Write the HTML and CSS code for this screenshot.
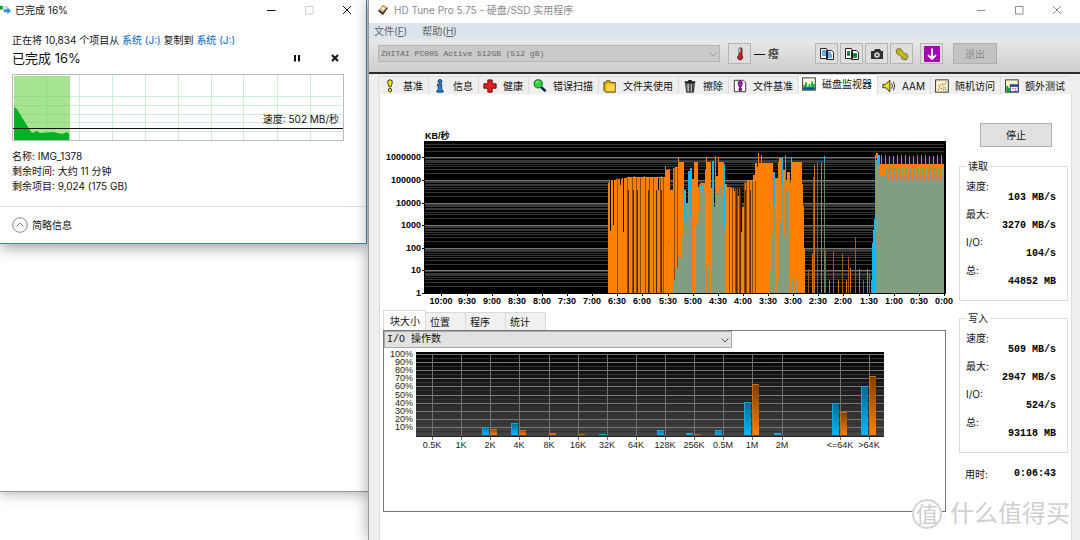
FILE: index.html
```html
<!DOCTYPE html>
<html lang="zh-CN">
<head>
<meta charset="utf-8">
<title>HD Tune Pro 5.75</title>
<link rel="stylesheet" href="styles.css">
</head>
<body>
<div class="desktop">
  <div class="window back-window"></div>

  <section class="window copy-window" aria-label="文件复制">
    <header class="titlebar copy-title">
      <svg class="copy-icon" viewBox="0 0 12 12"><rect x="0" y="2" width="9" height="5" fill="#ddd"/><rect x="0" y="2" width="3" height="4" fill="#14a32c"/><path d="M4 6h4V3.500L12 7.500 8 11V9H4z" fill="#2f8fdc"/></svg>
      <h1>已完成 16%</h1>
      <div class="win-buttons">
        <button aria-label="最小化"><svg viewBox="0 0 10 10"><path d="M1 5.500h8.500"/></svg></button>
        <button aria-label="最大化" class="off"><svg viewBox="0 0 10 10"><path d="M1.500 1.500h7.500v7.500h-7.500z"/></svg></button>
        <button aria-label="关闭"><svg viewBox="0 0 10 10"><path d="M1 1l8 8M9 1L1 9"/></svg></button>
      </div>
    </header>
    <div class="copy-body">
      <p class="copy-line">正在将 10,834 个项目从 <a href="#">系统 (J:)</a> 复制到 <a href="#">系统 (J:)</a></p>
      <div class="copy-status">
        <h2>已完成 16%</h2>
        <button aria-label="暂停"><svg viewBox="0 0 10 10"><path d="M3 2v6.500M7 2v6.500"/></svg></button>
        <button aria-label="取消"><svg viewBox="0 0 10 10"><path d="M2 2l6 6M8 2L2 8"/></svg></button>
      </div>
      <svg class="speed-graph" viewBox="0 0 332 67">
        <rect x=".5" y=".5" width="331" height="66" fill="#fff" stroke="#bcbcbc"/>
        <path d="M34.500 1v65M67.500 1v65M100.500 1v65M133.500 1v65M166.500 1v65M199.500 1v65M231.500 1v65M265.500 1v65M298.500 1v65M1 22.500h329M1 31.500h329M1 40.500h329M1 48.500h329M1 57.500h329" stroke="#cdeed2" fill="none"/>
        <rect x="2" y="2" width="56" height="64" fill="#a6e48f"/>
        <path d="M34.500 2v64M2 22.500h56M2 31.500h56M2 40.500h56M2 48.500h56" stroke="#8fdd83" fill="none"/>
        <path d="M2 33l3 2 9 15 6 9 5-2 3 2 14-1 3 1 5 1 5-2 2 2v6H2z" fill="#06b025"/>
        <path d="M1 54.500h330" stroke="#111"/>
        <text x="327" y="49" text-anchor="end">速度: 502 MB/秒</text>
      </svg>
      <ul class="copy-info">
        <li>名称: IMG_1378</li>
        <li>剩余时间: 大约 11 分钟</li>
        <li>剩余项目: 9,024 (175 GB)</li>
      </ul>
    </div>
    <footer class="copy-footer">
      <button><svg viewBox="0 0 16 16"><circle cx="8" cy="8" r="7.300"/><path d="M4.500 9.500L8 6l3.500 3.500"/></svg>简略信息</button>
    </footer>
  </section>

  <section class="window main-window" aria-label="HD Tune Pro">
    <header class="titlebar main-title">
      <svg class="app-icon" viewBox="0 0 12 12"><path d="M1 7l5-6 5 3-5 7z" fill="#3a2a20"/><path d="M2 6l4-5 4 2.500-4 5z" fill="#e0a870"/><circle cx="6" cy="4.500" r="1.500" fill="#fff0d8"/></svg>
      <h1>HD Tune Pro 5.75 - 硬盘/SSD 实用程序</h1>
      <div class="win-buttons">
        <button aria-label="最小化"><svg viewBox="0 0 10 10"><path d="M1 5.500h8.500"/></svg></button>
        <button aria-label="最大化"><svg viewBox="0 0 10 10"><path d="M1.500 1.500h7.500v7.500h-7.500z"/></svg></button>
        <button aria-label="关闭"><svg viewBox="0 0 10 10"><path d="M1 1l8 8M9 1L1 9"/></svg></button>
      </div>
    </header>
    <nav class="menubar"><button>文件(<u>F</u>)</button><button>帮助(<u>H</u>)</button></nav>
    <div class="toolbar">
      <div class="combo drive-combo">
        <select disabled aria-label="驱动器"><option>ZHITAI PC005 Active 512GB (512 gB)</option></select>
        <svg viewBox="0 0 10 10"><path d="M1.500 3.500L5 7l3.500-3.500"/></svg>
      </div>
      <button class="tool" aria-label="温度"><svg viewBox="0 0 16 16"><path d="M7 2.500q1.500-1.500 3 0V9q2 3-1 5-3 0-3.500-2 0-2 1.500-3z" fill="#e01818" stroke="#222" stroke-width=".8"/><path d="M7.700 2.500v4" stroke="#9fd8ea" stroke-width="1.500"/></svg></button>
      <span class="temp">— 癈</span>
      <div class="tool-group">
        <button class="tool" aria-label="复制文本"><svg viewBox="0 0 16 16"><path d="M1.500 2.500h6l1 2v8h-7zM7.500 4.500h5l2 2v7h-7z" fill="#fff" stroke="#222"/><path d="M3 5h4M3 7h4M3 9h4M9 7h3M9 9h4M9 11h4" stroke="#3f8fe0" stroke-width="1.400"/></svg></button>
        <button class="tool" aria-label="复制图像"><svg viewBox="0 0 16 16"><path d="M1.500 2.500h6l1 2v8h-7zM7.500 4.500h5l2 2v7h-7z" fill="#fff" stroke="#222"/><path d="M3 5h3v5H3zM9 7h4v5H9z" fill="#20a030"/><path d="M3 8h3M9 9h4" stroke="#104080"/></svg></button>
        <button class="tool" aria-label="截图"><svg viewBox="0 0 16 16"><path d="M2 5h3l1-2h5l1 2h2v8H2z" fill="#2c3030"/><circle cx="8" cy="9" r="2.800" fill="#d8dce0"/><circle cx="8" cy="9" r="1.300" fill="#555"/></svg></button>
        <button class="tool" aria-label="选项"><svg viewBox="0 0 16 16"><path d="M2 4l3-2 3 2 1 3 4 1 1 3-2 3-4-1-1-3-4-2z" fill="#c8c020" stroke="#6a6410" stroke-width=".8"/><circle cx="5" cy="5" r="1.200" fill="#eee890" stroke="#6a6410" stroke-width=".6"/><circle cx="11" cy="11" r="1.300" fill="#eee890" stroke="#6a6410" stroke-width=".6"/></svg></button>
      </div>
      <button class="tool" aria-label="保存"><svg viewBox="0 0 16 16"><rect x="0" y="0" width="16" height="16" rx="1" fill="#a800b4"/><path d="M8 2.500v10M4 9l4 4 4-4" fill="none" stroke="#fff" stroke-width="1.800"/></svg></button>
      <button class="exit" disabled>退出</button>
    </div>

    <div class="main-tabs" role="tablist">
      <button role="tab"><svg viewBox="0 0 16 16"><path d="M5.500 2q2.500-2.500 5 0 .5 3-1.500 7H7Q5 5 5.500 2z" fill="#f4e800" stroke="#222"/><circle cx="8" cy="12.800" r="2" fill="#f4e800" stroke="#222"/></svg>基准</button>
      <button role="tab"><svg viewBox="0 0 16 16"><circle cx="8" cy="2.800" r="2.200" fill="#1688e8" stroke="#123"/><path d="M5 6h5v7h1.500v2h-7v-2H6V8H5z" fill="#1688e8" stroke="#123" stroke-width=".9"/></svg>信息</button>
      <button role="tab"><svg viewBox="0 0 16 16"><path d="M5.500 1h5v4.500H15v5h-4.500V15h-5v-4.500H1v-5h4.500z" fill="#e42020" stroke="#500"/></svg>健康</button>
      <button role="tab"><svg viewBox="0 0 16 16"><path d="M9 9l5.500 5" stroke="#102060" stroke-width="3"/><circle cx="6" cy="5.500" r="4.700" fill="#28d838" stroke="#174a1c"/><path d="M3.500 5q.5-2 2.500-2.500" stroke="#c8ffc8" fill="none"/></svg>错误扫描</button>
      <button role="tab"><svg viewBox="0 0 16 16"><path d="M1 4h2l1-2h4l1 2h5v11H3L1 13z" fill="#dcae10" stroke="#4e3c00"/><path d="M4 6h9.500v8H4z" fill="#f8d848"/></svg>文件夹使用</button>
      <button role="tab"><svg viewBox="0 0 16 16"><path d="M2 3.500h12M6 2h4" stroke="#222" stroke-width="2"/><path d="M3 5h10l-1 10H4z" fill="#777" stroke="#222"/><path d="M6 6v8M9.500 6v8" stroke="#ddd"/><path d="M8 6v8M11 6v8" stroke="#222"/></svg>擦除</button>
      <button role="tab"><svg viewBox="0 0 16 16"><path d="M1.500 1.500h10l3 3v10h-13z" fill="#fff" stroke="#222"/><path d="M6 3.500q2.500-2 4.500 0 .5 2.500-1.500 6H7.500Q5.500 6 6 3.500z" fill="#b818c8" stroke="#303"/><circle cx="8.300" cy="12" r="1.600" fill="#b818c8" stroke="#303"/></svg>文件基准</button>
      <button role="tab" aria-selected="true"><svg viewBox="0 0 16 16"><rect x=".7" y="1" width="14.500" height="14" fill="#fffde0" stroke="#222"/><path d="M1.500 9h2V6h2v5h2V8h2v3h1V5h2v3h2v6.500H1.500z" fill="#10b028"/><path d="M1.500 12h13v2.500h-13z" fill="#1048a0"/></svg>磁盘监视器</button>
      <button role="tab"><svg viewBox="0 0 16 16"><path d="M1 6h3l5-4.500v13L4 10H1z" fill="#e8dc10" stroke="#222"/><path d="M11 5q2 3 0 6M13 3q3 5 0 10" fill="none" stroke="#222"/></svg>AAM</button>
      <button role="tab"><svg viewBox="0 0 16 16"><rect x=".7" y="1" width="14.500" height="14" fill="#fff8c8" stroke="#222"/><path d="M3 12h1M5 10h1M7 11h1M9 9h1M11 10h1M6 7h1M10 6h1" stroke="#e04030" stroke-width="1.500"/><path d="M4 8h1M8 6h1M12 4h1M12 12h1M9 12h1" stroke="#3060d0" stroke-width="1.500"/></svg>随机访问</button>
      <button role="tab"><svg viewBox="0 0 16 16"><rect x=".7" y="1" width="14.500" height="14" fill="#fff8c8" stroke="#222"/><path d="M1.500 8h2v2h2v5h-4z" fill="#10a028"/><rect x="6" y="6.500" width="9" height="8" fill="#fff" stroke="#1838a0"/><path d="M6 8h9" stroke="#1838a0" stroke-width="2"/><path d="M8 11h2M11 13h2M11 11h2" stroke="#e04040"/></svg>额外测试</button>
    </div>

    <main class="panel">
      <div class="charts">
        <svg id="history" class="history" viewBox="383 128 563 182" role="img" aria-label="读写速度历史"></svg>
        <div class="sub-tabs" role="tablist">
          <button role="tab" aria-selected="true">块大小</button><button role="tab">位置</button><button role="tab">程序</button><button role="tab">统计</button>
        </div>
        <div class="block-panel">
          <div class="combo metric-combo">
            <select aria-label="指标"><option>I/O 操作数</option></select>
            <svg viewBox="0 0 10 10"><path d="M1.500 3.500L5 7l3.500-3.500"/></svg>
          </div>
          <svg id="blocks" class="blocks" viewBox="384 348 561 104" role="img" aria-label="块大小分布"></svg>
        </div>
      </div>
      <aside class="side">
        <button class="stop">停止</button>
        <fieldset>
          <legend>读取</legend>
          <dl><dt>速度:</dt><dd>103 MB/s</dd><dt>最大:</dt><dd>3270 MB/s</dd><dt>I/O:</dt><dd>104/s</dd><dt>总:</dt><dd>44852 MB</dd></dl>
        </fieldset>
        <fieldset>
          <legend>写入</legend>
          <dl><dt>速度:</dt><dd>509 MB/s</dd><dt>最大:</dt><dd>2947 MB/s</dd><dt>I/O:</dt><dd>524/s</dd><dt>总:</dt><dd>93118 MB</dd></dl>
        </fieldset>
        <p class="elapsed"><span>用时:</span><strong>0:06:43</strong></p>
      </aside>
    </main>
  </section>
  <div class="watermark"><span class="seal">值</span><span>什么值得买</span></div>
</div>
<script src="app.js"></script>
</body>
</html>
```
FILE: styles.css
```css
* { box-sizing: border-box; }
body {
  margin: 0;
  font: 10px/14px Inter, "Noto Sans CJK SC", sans-serif;
  color: #111;
  background: #fff;
}
h1, h2, p, ul, dl, dd { margin: 0; padding: 0; font-weight: normal; }
ul { list-style: none; }
button, select { font: inherit; color: inherit; margin: 0; padding: 0; border: 0; background: none; border-radius: 0; }
svg { display: block; flex: none; }

.desktop { position: relative; height: 100vh; overflow: hidden; }
.window { position: absolute; top: 0; background: #fff; }
.back-window { left: 0; width: 369px; height: 492px; border-bottom: 1px solid #999; box-shadow: 0 2px 12px rgba(0,0,0,.3); }
.copy-window { left: 0; width: 367px; border: solid #3c87c4; border-width: 0 1px 1px 0; box-shadow: 0 3px 14px rgba(0,0,0,.4); }
.main-window { left: 368px; right: 0; min-height: 100%; display: flex; flex-direction: column; background: #efefef; border-left: 1px solid #999; box-shadow: 0 0 14px rgba(0,0,0,.35); }

.titlebar { display: flex; align-items: center; }
.titlebar h1 { font-size: 10px; flex: 1; }
.win-buttons { display: flex; }
.win-buttons button { width: 38px; height: 18px; display: grid; place-items: center; }
.win-buttons svg { width: 10px; height: 10px; fill: none; stroke: currentColor; }
.win-buttons .off { color: #ccc; }

.copy-title { height: 19px; gap: 4px; }
.copy-title h1 { font-size: 10px; }
.copy-icon { width: 11px; height: 11px; }
.copy-body { padding: 14px 22px 12px 12px; }
.copy-line a { color: #0066cc; text-decoration: none; }
.copy-status { display: flex; align-items: center; gap: 20px; height: 20px; margin: 1px 0 6px; }
.copy-status h2 { flex: 1; font-size: 13px; line-height: 20px; }
.copy-status button { width: 18px; display: grid; place-items: center; }
.copy-status svg { width: 10px; height: 10px; fill: none; stroke: #111; stroke-width: 2; }
.speed-graph { width: 100%; margin-bottom: 8px; }
.speed-graph text { font-size: 10px; fill: #111; }
.copy-info { line-height: 15px; }
.copy-footer { border-top: 1px solid #dfdfdf; padding: 10px 12px; }
.copy-footer button { display: flex; align-items: center; gap: 4px; }
.copy-footer svg { width: 16px; height: 16px; fill: none; stroke: #888; }

.main-title { height: 23px; padding: 0 4px 4px 8px; gap: 5px; background: #fff; color: #8c8c8c; }
.app-icon { width: 12px; height: 12px; }
.menubar { display: flex; gap: 15px; padding: 0 5px; height: 16px; background: #dbe3ec; color: #666; }
.toolbar { display: flex; align-items: center; height: 35px; padding: 0 9px 4px; background: linear-gradient(#e9e9e9, #cecece); border-bottom: 2px solid #2b2b2b; }
.combo { position: relative; }
.combo select { display: block; width: 100%; height: 17px; padding: 0 2px; appearance: none; border: 1px solid #aaa; opacity: 1; }
.combo svg { position: absolute; right: 2px; top: 4px; width: 10px; height: 10px; fill: none; stroke: #555; pointer-events: none; }
.drive-combo { flex: 0 1 342px; margin-right: 8px; }
.drive-combo select { font-family: "Liberation Mono", monospace; font-size: 8px; background: #cacaca; border-color: #b4b4b4; color: #666; }
.drive-combo svg { stroke: #999; }
.tool { width: 23px; height: 21px; display: grid; place-items: center; border: 1px solid #b5b5b5; background: #dedede; }
.tool svg { width: 16px; height: 16px; }
.temp { display: block; width: 64px; padding-left: 3px; font-size: 11px; }
.tool-group { display: flex; gap: 2px; margin-right: 7px; }
.exit { width: 44px; height: 21px; margin-left: 10px; border: 1px solid #b0b0b0; background: #c3c3c3; color: #8c8c8c; }

.main-tabs { display: flex; align-items: flex-end; height: 20px; padding: 0 9px; }
.main-tabs button { display: flex; align-items: center; gap: 6px; height: 18px; padding: 0 5px 0 4px; border: solid #dcdcdc; border-width: 1px 0 0 1px; white-space: nowrap; }
.main-tabs svg { width: 14px; height: 14px; }
.main-tabs button[aria-selected="true"] { height: 20px; padding-left: 3px; padding-bottom: 2px; background: #fff; }

.panel { flex: 1; display: flex; gap: 13px; margin: 0 8px 0 10px; padding: 0 3px; background: #fff; border: solid #dcdcdc; border-width: 0 1px; }
.charts { flex: 1; min-width: 0; padding-top: 34px; }
.history, .blocks { width: 100%; overflow: visible; }
.history text { font: bold 9px "Liberation Sans", "Noto Sans CJK SC", sans-serif; }
.blocks text { font: 9px "Liberation Sans", sans-serif; fill: #222; }
.sub-tabs { display: flex; align-items: flex-end; height: 20px; }
.sub-tabs button { width: 40px; height: 18px; padding: 0 4px; text-align: left; background: #f0f0f0; border: solid #d9d9d9; border-width: 1px 1px 0 0; }
.sub-tabs button[aria-selected="true"] { width: 43px; height: 20px; padding-left: 6px; background: #fff; border-left-width: 1px; }
.block-panel { border: 1px solid #777; padding-bottom: 59px; }
.metric-combo { width: 62%; }
.metric-combo select { background: #e1e1e1; font-family: "Liberation Mono", "Noto Sans CJK SC", monospace; }

.side { flex: 0 0 109px; padding-top: 29px; }
.stop { display: block; width: 72px; height: 24px; margin: 0 auto 12px 21px; border: 1px solid #adadad; background: #e1e1e1; }
.side fieldset { margin: 0 0 10px; padding: 7px 11px 12px 6px; height: 142px; border: 1px solid #dcdcdc; min-width: 0; }
.side legend { padding: 0 2px; line-height: 14px; }
.side dt { line-height: 12px; }
.side dd { line-height: 12px; margin-bottom: 4px; text-align: right; }
.side dd, .elapsed strong { font-family: "Liberation Mono", monospace; font-weight: bold; color: #000; }
.elapsed { display: flex; justify-content: space-between; padding: 4px 12px 0 6px; }

.watermark { position: absolute; right: 10px; bottom: 10px; display: flex; align-items: center; gap: 8px; font-size: 24px; line-height: 32px; color: #cfcfcf; }
.seal { width: 30px; height: 30px; line-height: 26px; font-size: 22px; text-align: center; border-radius: 50%; background: #fff; border: 2px solid #d4d4d4; }
```
FILE: app.js
```js
const NS = 'http://www.w3.org/2000/svg';
function add(parent, tag, attrs, text) {
  const el = document.createElementNS(NS, tag);
  for (const k in attrs) el.setAttribute(k, attrs[k]);
  if (text !== undefined) el.textContent = text;
  parent.appendChild(el);
  return el;
}
const rect = (p, x, y, w, h, fill) =>
  add(p, 'rect', { x, y, width: w, height: h, fill, 'shape-rendering': 'crispEdges' });

const ORANGE = '#ff8000', CYAN = '#10b8f8', BOTH = '#809f80', DIM = '#8a4a08';

function drawHistory(svg) {
  const base = 293, decade = 22.6;
  rect(svg, 424, 141, 522, 153, '#000');
  for (let d = 0; d < 7; d++) {
    for (let m = 1; m < 10; m++) {
      const y = Math.round(base - (d + Math.log10(m)) * decade);
      if (y > 142) rect(svg, 425, y, 519, 1, m === 1 ? '#777' : '#383838');
    }
    const y = Math.round(base - d * decade);
    rect(svg, 422, y, 2, 1, '#000');
    add(svg, 'text', { x: 421, y: y + 3, 'text-anchor': 'end' }, String(10 ** d));
  }
  add(svg, 'text', { x: 425, y: 139 }, 'KB/秒');
  for (let i = 0; i <= 20; i++) {
    const x = Math.round(944 - i * 25.13);
    const t = Math.floor(i / 2) + (i % 2 ? ':30' : ':00');
    rect(svg, x, 293, 1, 3, '#000');
    add(svg, 'text', { x: x, y: 304, 'text-anchor': 'middle' }, t);
  }

  // [left, right, top] spans
  const spans = (list, fill) => list.forEach(([a, b, t]) => rect(svg, a, t, b - a, base - t, fill));
  spans([[608,609,183],[609,616,180],[616,622,179],[622,627,178],[627,634,177],[634,635,176],[635,644,177],[644,645,176],[645,661,177],[661,662,176],[662,665,177],
    [665,666,166],[666,668,170],[668,670,169],[670,673,190],[673,675,168],[675,678,167],[678,679,157],[679,684,162],[684,686,190],[686,692,203],
    [692,694,179],[694,698,162],[698,700,187],[700,705,183],[705,706,170],[706,707,157],[707,711,162],[711,713,188],[713,715,208],[715,718,176],[718,719,157],[719,724,162],[724,727,184],
    [727,731,187],[731,734,188],[734,738,191],[738,740,196],[740,742,202],[742,744,207],[744,746,183],[746,748,181],[748,753,180],[753,755,175],[755,757,163],[757,758,167],[758,759,153],[759,761,163],[761,762,155],[762,773,163],[773,775,178],[775,778,178],
    [778,779,162],[779,783,158],[783,785,170],[785,787,180],[787,790,172],[790,791,182],[791,792,157],[792,802,162],[802,803,184],[803,804,206],[804,805,249]], ORANGE);
  [[610,231],[613,225],[617,293],[620,185],[623,232],[627,293],[632,293],[636,293],[640,293],[645,293],[649,293],[653,293],[658,190],[660,293],[663,293],
   [674,293],[677,293],[729,293],[732,293],[735,293],[737,293],[739,293],[741,232],[744,293],[746,293],[749,293],[752,293],[755,293]]
    .forEach(([x, b]) => {
      const top = x < 670 ? 178 : x < 700 ? 168 : x < 744 ? 188 : 181;
      rect(svg, x, top, 1, b - top, b < 293 ? '#080400' : DIM);
    });
  [628, 633, 637, 648, 656, 661, 736, 740, 745, 750]
    .forEach(x => rect(svg, x, 190, 1, 103, '#4c2804'));

  spans([[684,685,190],[685,688,205],[688,690,171],[690,692,168],[699,703,185],[712,714,161],[715,716,156],[724,725,164],[773,775,172],[781,783,158],[785,786,155]], CYAN);
  spans([[667,668,243],[673,675,280],[675,678,268],[678,680,255],[680,682,258],[682,684,235],[684,686,221],[686,688,203],[688,690,190],[690,692,218],
    [696,698,225],[698,700,214],[700,702,187],[702,705,192],[705,706,268],[707,709,265],[712,714,188],[714,716,207],[716,719,193],[719,722,186],[722,725,195],
    [770,772,271],[772,773,233],[773,775,205],[777,779,280],[779,781,222],[781,783,185],[783,785,236],[785,786,188],[786,789,190],[791,793,279],[796,797,279]], BOTH);
  rect(svg, 684, 190, 1, 31, CYAN);
  rect(svg, 724, 178, 1, 50, CYAN);

  [[808,269],[812,254],[813,177],[814,165],[817,162],[821,162],[825,251],[829,280],[833,251],[838,280],[842,253],[846,280],[848,257],[850,268],
   [855,237],[859,269],[863,280],[867,269],[869,273],[871,280]].forEach(([x, y], i) => rect(svg, x, y, 1, base - y, i % 2 ? '#d87010' : '#a85808'));
  rect(svg, 824, 156, 1, 137, '#668866');
  rect(svg, 824, 156, 1, 6, CYAN);

  spans([[872,873,243],[873,874,230],[874,875,219],[875,876,155]], CYAN);
  rect(svg, 876, 160, 68, 133, BOTH);
  rect(svg, 880, 164, 64, 12, ORANGE);
  for (let x = 877; x < 944; x += 4) {
    const n = (x * 7) % 5;
    rect(svg, x, 155 + n % 2, 1, 9, CYAN);
    if (x > 882) rect(svg, x + 1, 168, 1, 9, BOTH);
    if (n % 2) rect(svg, x, 162, 1, 12, CYAN);
    if (x > 882) rect(svg, x + 3, 174, 1, 6, ORANGE);
  }
  for (let x = 878; x < 943; x += 4) rect(svg, x, 157, 3, 7, '#151515');
  rect(svg, 876, 153, 2, 5, ORANGE);
  rect(svg, 878, 155, 2, 10, CYAN);
  rect(svg, 944, 141, 2, 153, '#000');
  rect(svg, 424, 293, 522, 1, '#000');
}

function drawBlocks(svg) {
  const defs = add(svg, 'defs', {});
  const gradient = (id, from, to) => {
    const g = add(defs, 'linearGradient', { id, x1: 0, y1: 0, x2: 0, y2: 1 });
    add(g, 'stop', { offset: 0, 'stop-color': from });
    add(g, 'stop', { offset: 1, 'stop-color': to });
  };
  gradient('plot', '#000', '#444');
  gradient('blue', '#006890', '#00b8ff');
  gradient('orange', '#7c4000', '#ff8000');
  rect(svg, 416, 352, 468, 85, 'url(#plot)');
  for (let i = 0; i < 10; i++) {
    const y = Math.round(354 + i * 8.1);
    rect(svg, 416, y, 468, 1, '#777');
    rect(svg, 416, y + 4, 468, 1, '#333');
    add(svg, 'text', { x: 413, y: y + 3, 'text-anchor': 'end' }, (100 - i * 10) + '%');
  }
  const rows = [['0.5K'],['1K'],['2K',427,429],['4K',423,430],['8K',0,433],['16K',0,434],['32K',434],['64K'],['128K',430],['256K',433,434],['0.5M',430],['1M',402,384],['2M',433],null,['<=64K',403,412],['>64K',386,376]];
  rows.forEach((row, i) => {
    if (!row) return;
    const x = Math.round(432 + i * 29.13);
    rect(svg, x, 354, 1, 86, '#707070');
    add(svg, 'text', { x, y: 448, 'text-anchor': 'middle' }, row[0]);
    const bar = (left, top, fill, edge) => {
      if (!top) return;
      rect(svg, left, top, 7, 435 - top, `url(#${fill})`);
      rect(svg, left, top, 7, 1, edge);
      rect(svg, left, top, 1, 435 - top, edge);
    };
    bar(x - 8, row[1], 'blue', '#10a8e0');
    bar(x, row[2], 'orange', '#d06a08');
  });
  rect(svg, 416, 436, 468, 1, '#222');
}

drawHistory(document.getElementById('history'));
drawBlocks(document.getElementById('blocks'));
```
